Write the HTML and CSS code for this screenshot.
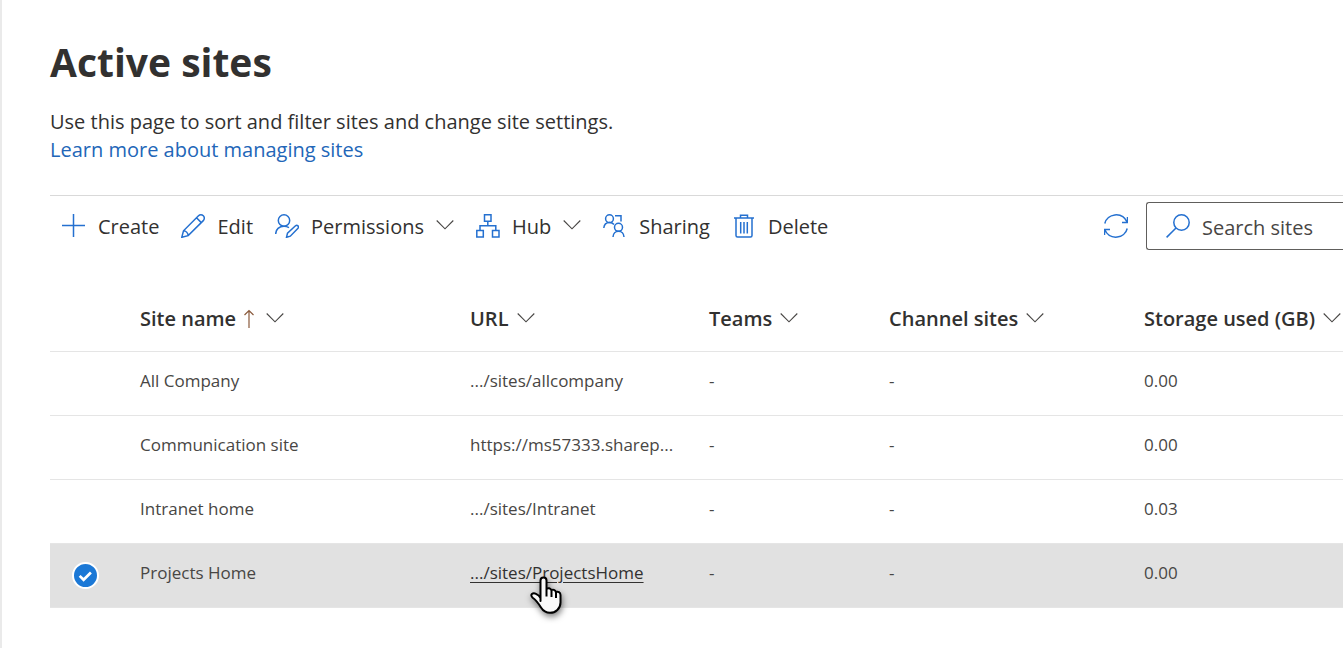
FILE: index.html
```html
<!DOCTYPE html>
<html lang="en">
<head>
<meta charset="utf-8">
<title>Active sites</title>
<link rel="stylesheet" href="styles.css">
</head>
<body>
<svg class="defs" aria-hidden="true">
  <symbol id="chevron" viewBox="0 0 18 24"><path d="M.7 6.500 9 14.800 17.300 6.500"/></symbol>
</svg>
<main class="page">
  <header class="intro">
    <h1 class="title">Active sites</h1>
    <p class="lead">Use this page to sort and filter sites and change site settings.</p>
    <a class="learn" href="#">Learn more about managing sites</a>
  </header>

  <div class="toolbar">
    <div class="commands">
      <button class="command" type="button">
        <svg class="icon" viewBox="0 0 24 24"><path d="M11.500 0v23M0 11.500h23"/></svg>
        <span class="label">Create</span>
      </button>
      <button class="command" type="button">
        <svg class="icon" viewBox="0 0 24 24"><path d="M.8 23.300 2.500 16.800 17.500 1.800a3.300 3.300 0 0 1 4.800 4.800L7.200 21.600ZM15.500 3.800l4.800 4.800M2.500 16.800c2.400.2 4.500 2.300 4.700 4.800"/></svg>
        <span class="label">Edit</span>
      </button>
      <button class="command" type="button">
        <svg class="icon" viewBox="0 0 24 24"><circle cx="9" cy="6.500" r="5.700"/><path d="M.7 20c0-4.600 3.500-7.800 8.300-7.800 2 0 3.600.5 5 1.400M11.500 23.300l1-4.200 8-7.300c1.700-1.400 3.900.7 2.500 2.400l-7.700 8Z"/></svg>
        <span class="label">Permissions</span>
        <svg class="chevron"><use href="#chevron"/></svg>
      </button>
      <button class="command" type="button">
        <svg class="icon" viewBox="0 0 24 24"><path d="M8.500.8h6.500v6.500H8.500ZM.8 16.500h6.500V23H.8ZM16.500 16.500H23V23h-6.500ZM11.800 7.300v4.500M4 16.500v-4.700h15.800v4.700"/></svg>
        <span class="label">Hub</span>
        <svg class="chevron"><use href="#chevron"/></svg>
      </button>
      <button class="command" type="button">
        <svg class="icon" viewBox="0 0 24 24"><circle cx="6.500" cy="4.700" r="3.900"/><circle cx="15.500" cy="13.300" r="4"/><path d="M.8 14c.3-3.200 2.500-5.400 5.700-5.400 2 0 3.500.8 4.500 2M10 23c.2-3.400 2.500-5.700 5.500-5.700s5.300 2.300 5.500 5.700M12 1.800h6v5.700"/></svg>
        <span class="label">Sharing</span>
      </button>
      <button class="command" type="button">
        <svg class="icon" viewBox="0 0 24 24"><path d="M2 4h20M8.500 4V1.200h7V4M4 4v17.500c0 .9.600 1.500 1.500 1.500h13c.9 0 1.500-.6 1.500-1.500V4M8.700 8v11.500M12 8v11.500M15.300 8v11.500"/></svg>
        <span class="label">Delete</span>
      </button>
    </div>
    <button class="refresh" type="button" aria-label="Refresh">
      <svg class="icon" viewBox="0 0 24 24"><path d="M.8 9.500C3-.5 18-3 23.200 8.200M23.500 3v5.500H18M23.200 14.500C21 24.500 6 27 .8 15.800M.5 21v-5.500H6"/></svg>
    </button>
    <label class="search">
      <svg class="icon" viewBox="0 0 24 24"><circle cx="15.500" cy="8.500" r="7.700"/><path d="M10 14 .6 23.400"/></svg>
      <input class="search-input" type="search" placeholder="Search sites" aria-label="Search sites">
    </label>
  </div>

  <table class="sites">
    <colgroup><col class="c-check"><col class="c-name"><col class="c-url"><col class="c-teams"><col class="c-channel"><col></colgroup>
    <thead>
      <tr>
        <td></td>
        <th scope="col"><button class="sort" type="button">Site name <svg class="arrow" viewBox="0 0 14 24"><path d="M5 21V3.500M.5 8 5 3.500 9.500 8"/></svg><svg class="chevron"><use href="#chevron"/></svg></button></th>
        <th scope="col"><button class="sort" type="button">URL <svg class="chevron"><use href="#chevron"/></svg></button></th>
        <th scope="col"><button class="sort" type="button">Teams <svg class="chevron"><use href="#chevron"/></svg></button></th>
        <th scope="col"><button class="sort" type="button">Channel sites <svg class="chevron"><use href="#chevron"/></svg></button></th>
        <th scope="col"><button class="sort" type="button">Storage used (GB) <svg class="chevron"><use href="#chevron"/></svg></button></th>
      </tr>
    </thead>
    <tbody>
      <tr><td></td><td>All Company</td><td><a class="url" href="#">.../sites/allcompany</a></td><td>-</td><td>-</td><td>0.00</td></tr>
      <tr><td></td><td>Communication site</td><td><a class="url" href="#">https://ms57333.sharep...</a></td><td>-</td><td>-</td><td>0.00</td></tr>
      <tr><td></td><td>Intranet home</td><td><a class="url" href="#">.../sites/Intranet</a></td><td>-</td><td>-</td><td>0.03</td></tr>
      <tr class="selected">
        <td class="check-cell">
          <label class="check">
            <input class="check-input" type="checkbox" checked aria-label="Select Projects Home">
            <svg class="check-mark" viewBox="0 0 24 24"><path d="m6.800 12.300 3.500 3.500 6.500-6.500"/></svg>
          </label>
        </td>
        <td>Projects Home</td>
        <td class="pointed">
          <a class="url hovered" href="#">.../sites/ProjectsHome</a>
          <svg class="pointer" viewBox="0 0 36 42" aria-hidden="true"><path d="M10.500 26V5.500c0-4 6-4 6 0V14c1.500-1.400 4.200-.9 4.800 1.200 1.600-1 4-.4 4.500 1.700 2.200-.8 4.700.4 4.700 3.100v7.500c0 6-5 10.300-10.500 10.300-4.200 0-6.800-1.800-9-5.300-2.200-3.600-5-7.500-8.300-9.800-3.300-3 .1-5.400 3.300-3.900 2 .9 3.500 2 4.500 4.200ZM16.500 14v7.500M21.500 15.500v6.500M26 17v6"/></svg>
        </td>
        <td>-</td><td>-</td><td>0.00</td>
      </tr>
    </tbody>
  </table>
</main>
</body>
</html>
```
FILE: styles.css
```css
* { box-sizing: border-box; }
body {
  margin: 0;
  background: #fff;
  color: #323130;
  font-family: "Open Sans", "Noto Sans", sans-serif;
  font-size: 20px;
  overflow-x: hidden;
}
svg { fill: none; flex: none; }
.defs { position: absolute; width: 0; height: 0; }
button {
  margin: 0;
  padding: 0;
  border: 0;
  background: none;
  color: inherit;
  font: inherit;
  cursor: pointer;
}
.page {
  min-height: 100vh;
  padding: 32px 0 0 48px;
  border-left: 2px solid #eaeaea;
}
.title {
  margin: 0 0 16px;
  font-size: 39px;
  line-height: 60px;
  font-weight: 700;
}
.lead { margin: 0; line-height: 28px; }
.learn {
  color: #2266b8;
  line-height: 28px;
  text-decoration: none;
}
.toolbar {
  display: flex;
  align-items: center;
  margin-top: 31px;
  padding: 6px 0 0 12px;
  border-top: 1px solid #d9d9d9;
}
.commands {
  display: flex;
  flex: 1;
  gap: 22px;
}
.command {
  display: flex;
  align-items: center;
  gap: 12px;
  line-height: 28px;
}
.label { padding-top: 2px; }
.icon {
  width: 24px;
  height: 24px;
  stroke: #2470d0;
  stroke-width: 1.5;
}
.chevron {
  width: 18px;
  height: 24px;
  stroke: #484644;
  stroke-width: 1.1;
}
.refresh { display: flex; margin-right: 18px; }
.search {
  display: flex;
  align-items: center;
  gap: 12px;
  width: 197px;
  height: 48px;
  padding-left: 19px;
  border: 1px solid #605e5c;
  border-right: 0;
  border-radius: 3px 0 0 3px;
}
.search-input {
  flex: 1;
  min-width: 0;
  padding: 2px 0 0;
  border: 0;
  outline: 0;
  background: none;
  color: #484644;
  font: inherit;
}
.search-input::placeholder { color: #484644; opacity: 1; }
.sites {
  width: 100%;
  margin-top: 37px;
  border-collapse: collapse;
  table-layout: fixed;
  color: #484644;
  font-size: 17px;
}
.c-check { width: 90px; }
.c-name { width: 330px; }
.c-url { width: 239px; }
.c-teams { width: 180px; }
.c-channel { width: 255px; }
.sites th, .sites td {
  height: 64px;
  padding: 0 0 6px;
  border-bottom: 1px solid #e5e5e5;
  text-align: left;
  white-space: nowrap;
}
.sites th, .sites .check-cell { padding: 0; }
.sort {
  display: flex;
  align-items: center;
  gap: 8px;
  color: #323130;
  font-size: 20px;
  font-weight: 600;
}
.arrow {
  width: 14px;
  height: 24px;
  stroke: #8a5a3c;
  stroke-width: 1.2;
}
.url { color: inherit; text-decoration: none; }
.hovered {
  color: #323130;
  text-decoration: underline;
  text-decoration-thickness: 1px;
  text-underline-offset: 3px;
}
.selected { background: #e1e1e1; }
.check {
  display: grid;
  width: 27px;
  height: 27px;
  margin-left: 22px;
}
.check-input, .check-mark { grid-area: 1 / 1; width: 100%; height: 100%; }
.check-input {
  appearance: none;
  margin: 0;
  border: 2px solid #fff;
  border-radius: 50%;
  background: #1b78d6;
}
.check-mark {
  stroke: #fff;
  stroke-width: 2.4;
  pointer-events: none;
}
.pointed { position: relative; }
.pointer {
  position: absolute;
  top: 31px;
  left: 60px;
  width: 36px;
  height: 42px;
  overflow: visible;
  fill: #fafafa;
  stroke: #000;
  stroke-width: 2;
  stroke-linejoin: round;
  filter: drop-shadow(1px 3px 3px rgba(0, 0, 0, 0.5));
}
```
